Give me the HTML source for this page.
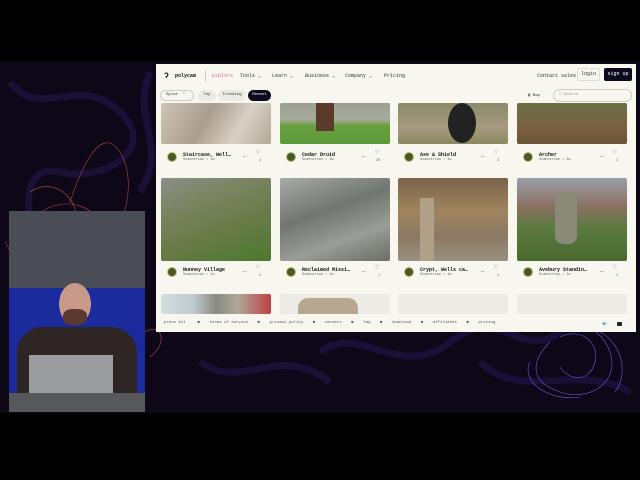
<!DOCTYPE html>
<html><head><meta charset="utf-8"><style>
*{margin:0;padding:0;box-sizing:border-box}
body{width:640px;height:480px;background:#000;position:relative;overflow:hidden;font-family:"Liberation Mono",monospace;}
.a{position:absolute}
.band{left:0;top:62px;width:640px;height:351px;background:#0e0718}
.br{left:156px;top:64px;width:480px;height:268px;background:#f7f6ef;overflow:hidden}
.nav{font-size:5px;color:#333}
.card{position:absolute;width:110px}
.img{position:absolute;left:0;width:110px;border-radius:2px}
.av{position:absolute;width:10px;height:10px;border-radius:50%;background:#4a5a22;border:1px solid #b8c080}
.t{position:absolute;font-size:5px;font-weight:bold;color:#111;white-space:nowrap}
.s{position:absolute;font-size:3.5px;color:#666;white-space:nowrap}
.h{position:absolute;font-size:6px;color:#555}
.foot{font-size:4px;color:#555;white-space:nowrap}
</style></head><body>
<div class="a band"></div>
<svg class="a" style="left:0;top:62px" width="640" height="351">
<g fill="none" stroke="#1a0f36" stroke-width="7">
<path d="M10 20 C40 60 80 10 120 50 S100 120 60 110 S20 160 50 190"/>
<path d="M150 10 C130 60 170 80 140 130"/>
<path d="M320 290 C360 260 400 320 450 280 S520 300 560 270"/>
<path d="M200 300 C240 330 280 280 330 320"/>
<path d="M480 300 C520 340 580 300 630 330"/>
</g>
<g fill="none" stroke="#b04a48" stroke-width="0.6">
<path d="M20 170 C40 140 80 130 100 160 S140 120 120 90 S80 110 70 140"/>
<path d="M5 180 C20 200 10 240 20 280 S10 320 30 340"/>
<path d="M30 130 C60 110 90 150 70 175"/>
<path d="M145 270 C160 260 170 280 150 295"/>
</g>
<g fill="none" stroke="#6a5ad8" stroke-width="0.6">
<path d="M540 270 C560 250 600 260 610 290 S590 340 560 330 S530 300 550 280"/>
<path d="M560 275 C580 265 600 280 595 300 S570 320 560 305"/>
<path d="M600 270 C620 280 630 310 615 330"/>
<path d="M530 300 C520 320 550 340 580 335"/>
</g>
</svg>
<div class="a" style="left:9px;top:211px;width:136px;height:201px;background:#4a4d53;overflow:hidden">
<div class="a" style="left:0;top:77px;width:136px;height:105px;background:#1b2a9c"></div>
<div class="a" style="left:50px;top:72px;width:32px;height:42px;border-radius:50%;background:#c99a8a"></div>
<div class="a" style="left:54px;top:98px;width:24px;height:16px;background:#5a3a30;border-radius:40%"></div>
<div class="a" style="left:8px;top:116px;width:120px;height:80px;background:#2e2624;border-radius:26px 26px 0 0"></div>
<div class="a" style="left:20px;top:144px;width:84px;height:40px;background:#9a9ca0"></div>
<div class="a" style="left:0;top:182px;width:136px;height:19px;background:#56585a"></div>
</div>
<div class="a br">
<div class="a nav" style="left:8px;top:8px;font-size:8px;font-weight:bold;color:#111">ʔ</div>
<div class="a nav" style="left:19px;top:9px;font-weight:bold;color:#111">polycam</div>
<div class="a" style="left:49px;top:6px;width:1px;height:12px;background:#ccc"></div>
<div class="a nav" style="left:56px;top:9px;color:#d07a80">Explore</div>
<div class="a nav" style="left:84px;top:9px">Tools ⌄</div>
<div class="a nav" style="left:116px;top:9px">Learn ⌄</div>
<div class="a nav" style="left:149px;top:9px">Business ⌄</div>
<div class="a nav" style="left:189px;top:9px">Company ⌄</div>
<div class="a nav" style="left:228px;top:9px">Pricing</div>
<div class="a nav" style="left:381px;top:9px">Contact sales</div>
<div class="a nav" style="left:421px;top:4px;width:23px;height:13px;border:1px solid #ddd;border-radius:2px;text-align:center;line-height:11px">login</div>
<div class="a nav" style="left:448px;top:4px;width:28px;height:13px;background:#0c0a1e;color:#fff;border-radius:2px;text-align:center;line-height:13px">sign up</div>
<div class="a nav" style="left:4px;top:26px;width:34px;height:11px;border:1px solid #ccc;border-radius:6px;line-height:9px;padding-left:5px;font-size:4px">Splat &nbsp;⌃</div>
<div class="a nav" style="left:42px;top:26px;width:18px;height:11px;background:#ecebe3;border-radius:6px;text-align:center;line-height:11px;font-size:4px">Top</div>
<div class="a nav" style="left:62px;top:26px;width:28px;height:11px;background:#ecebe3;border-radius:6px;text-align:center;line-height:11px;font-size:4px">Trending</div>
<div class="a nav" style="left:92px;top:26px;width:23px;height:11px;background:#0c0a1e;color:#fff;border-radius:6px;text-align:center;line-height:11px;font-size:4px">Recent</div>
<div class="a nav" style="left:372px;top:28px;font-size:4px">▥ Map</div>
<div class="a nav" style="left:397px;top:25px;width:79px;height:13px;border:1px solid #ccc;border-radius:7px;line-height:11px;padding-left:5px;font-size:4px;color:#999">⌕ Search</div>

<div class="card" style="left:5px;top:39px"><div class="img" style="top:0;height:41px;background:linear-gradient(120deg,#cfc6b8,#a99d8e 40%,#d8d0c4 70%,#b3a99a)"></div></div>
<div class="card" style="left:124px;top:39px"><div class="img" style="top:0;height:41px;background:linear-gradient(180deg,#9aa090 0,#a8ac9c 40%,#6aa040 55%,#5a9a38)"></div><div class="a" style="left:36px;top:0;width:18px;height:28px;background:#5a3a28"></div></div>
<div class="card" style="left:242px;top:39px"><div class="img" style="top:0;height:41px;background:linear-gradient(180deg,#8a8a6a,#a89a80 60%,#8a8a60)"></div><div class="a" style="left:50px;top:0;width:28px;height:40px;border-radius:50%;background:#222"></div></div>
<div class="card" style="left:361px;top:39px"><div class="img" style="top:0;height:41px;background:linear-gradient(180deg,#6a7048,#7a6040 60%,#6a5438)"></div></div>

<div class="card" style="left:5px;top:114px"><div class="img" style="top:0;height:83px;background:linear-gradient(160deg,#8a9088,#7a8460 30%,#6a7a48 60%,#4a7a30)"></div></div>
<div class="card" style="left:124px;top:114px"><div class="img" style="top:0;height:83px;background:linear-gradient(160deg,#a8aaa8,#707670 40%,#9a9c98 70%,#6a6e64)"></div></div>
<div class="card" style="left:242px;top:114px"><div class="img" style="top:0;height:83px;background:linear-gradient(180deg,#7a6448,#a08460 40%,#8a7a64 70%,#9a9080)"></div><div class="a" style="left:22px;top:20px;width:14px;height:63px;background:#b0a088"></div></div>
<div class="card" style="left:361px;top:114px"><div class="img" style="top:0;height:83px;background:linear-gradient(180deg,#9aa0a8 0,#8a7060 35%,#5a7a40 60%,#4a6a30)"></div><div class="a" style="left:38px;top:14px;width:22px;height:52px;border-radius:8px;background:#8a8a78"></div></div>

<div class="card" style="left:5px;top:230px"><div class="img" style="top:0;height:20px;background:linear-gradient(90deg,#d0e0e0,#c0c8d0 30%,#8a8a80 50%,#b0a898 70%,#c04040)"></div></div>
<div class="card" style="left:124px;top:230px"><div class="img" style="top:0;height:20px;background:#ecebe6"></div><div class="a" style="left:18px;top:4px;width:60px;height:16px;background:#b8a890;border-radius:10px 10px 0 0"></div></div>
<div class="card" style="left:242px;top:230px"><div class="img" style="top:0;height:20px;background:#ecebe6"></div></div>
<div class="card" style="left:361px;top:230px"><div class="img" style="top:0;height:20px;background:#ecebe6"></div></div>

<div class="av" style="left:11px;top:88px"></div><div class="t" style="left:27px;top:88px">Staircase, Well…</div><div class="s" style="left:27px;top:94px">Scannerian • 1w</div><div class="h" style="left:87px;top:88px">…</div><div class="h" style="left:100px;top:85px">♡</div><div class="s" style="left:103px;top:95px">2</div>
<div class="av" style="left:130px;top:88px"></div><div class="t" style="left:146px;top:88px">Cedar Druid</div><div class="s" style="left:146px;top:94px">Scannerian • 1w</div><div class="h" style="left:206px;top:88px">…</div><div class="h" style="left:219px;top:85px">♡</div><div class="s" style="left:220px;top:95px">30</div>
<div class="av" style="left:248px;top:88px"></div><div class="t" style="left:264px;top:88px">Axe &amp; Shield</div><div class="s" style="left:264px;top:94px">Scannerian • 1w</div><div class="h" style="left:325px;top:88px">…</div><div class="h" style="left:338px;top:85px">♡</div><div class="s" style="left:341px;top:95px">3</div>
<div class="av" style="left:367px;top:88px"></div><div class="t" style="left:383px;top:88px">Archer</div><div class="s" style="left:383px;top:94px">Scannerian • 1w</div><div class="h" style="left:444px;top:88px">…</div><div class="h" style="left:457px;top:85px">♡</div><div class="s" style="left:460px;top:95px">1</div>

<div class="av" style="left:11px;top:203px"></div><div class="t" style="left:27px;top:203px">Nunney Village</div><div class="s" style="left:27px;top:209px">Scannerian • 1w</div><div class="h" style="left:87px;top:203px">…</div><div class="h" style="left:100px;top:200px">♡</div><div class="s" style="left:103px;top:210px">2</div>
<div class="av" style="left:130px;top:203px"></div><div class="t" style="left:146px;top:203px">Reclaimed Missi…</div><div class="s" style="left:146px;top:209px">Scannerian • 1w</div><div class="h" style="left:206px;top:203px">…</div><div class="h" style="left:219px;top:200px">♡</div><div class="s" style="left:222px;top:210px">1</div>
<div class="av" style="left:248px;top:203px"></div><div class="t" style="left:264px;top:203px">Crypt, Wells ca…</div><div class="s" style="left:264px;top:209px">Scannerian • 1w</div><div class="h" style="left:325px;top:203px">…</div><div class="h" style="left:338px;top:200px">♡</div><div class="s" style="left:341px;top:210px">1</div>
<div class="av" style="left:367px;top:203px"></div><div class="t" style="left:383px;top:203px">Avebury Standin…</div><div class="s" style="left:383px;top:209px">Scannerian • 1w</div><div class="h" style="left:444px;top:203px">…</div><div class="h" style="left:457px;top:200px">♡</div><div class="s" style="left:460px;top:210px">1</div>

<div class="a" style="left:0;top:250px;width:480px;height:18px;background:#f7f6ef"></div>
<div class="a foot" style="left:8px;top:257px">press kit &nbsp;&nbsp;&nbsp; ■ &nbsp;&nbsp; terms of service &nbsp;&nbsp; ■ &nbsp;&nbsp; privacy policy &nbsp;&nbsp; ■ &nbsp;&nbsp; careers &nbsp;&nbsp; ■ &nbsp;&nbsp; faq &nbsp;&nbsp; ■ &nbsp;&nbsp; download &nbsp;&nbsp; ■ &nbsp;&nbsp; affiliates &nbsp;&nbsp; ■ &nbsp;&nbsp; pricing</div>
<div class="a foot" style="left:446px;top:257px;color:#111">🐦</div>
<div class="a" style="left:461px;top:258px;width:5px;height:4px;background:#222;border-radius:1px"></div>
</div>
</body></html>
